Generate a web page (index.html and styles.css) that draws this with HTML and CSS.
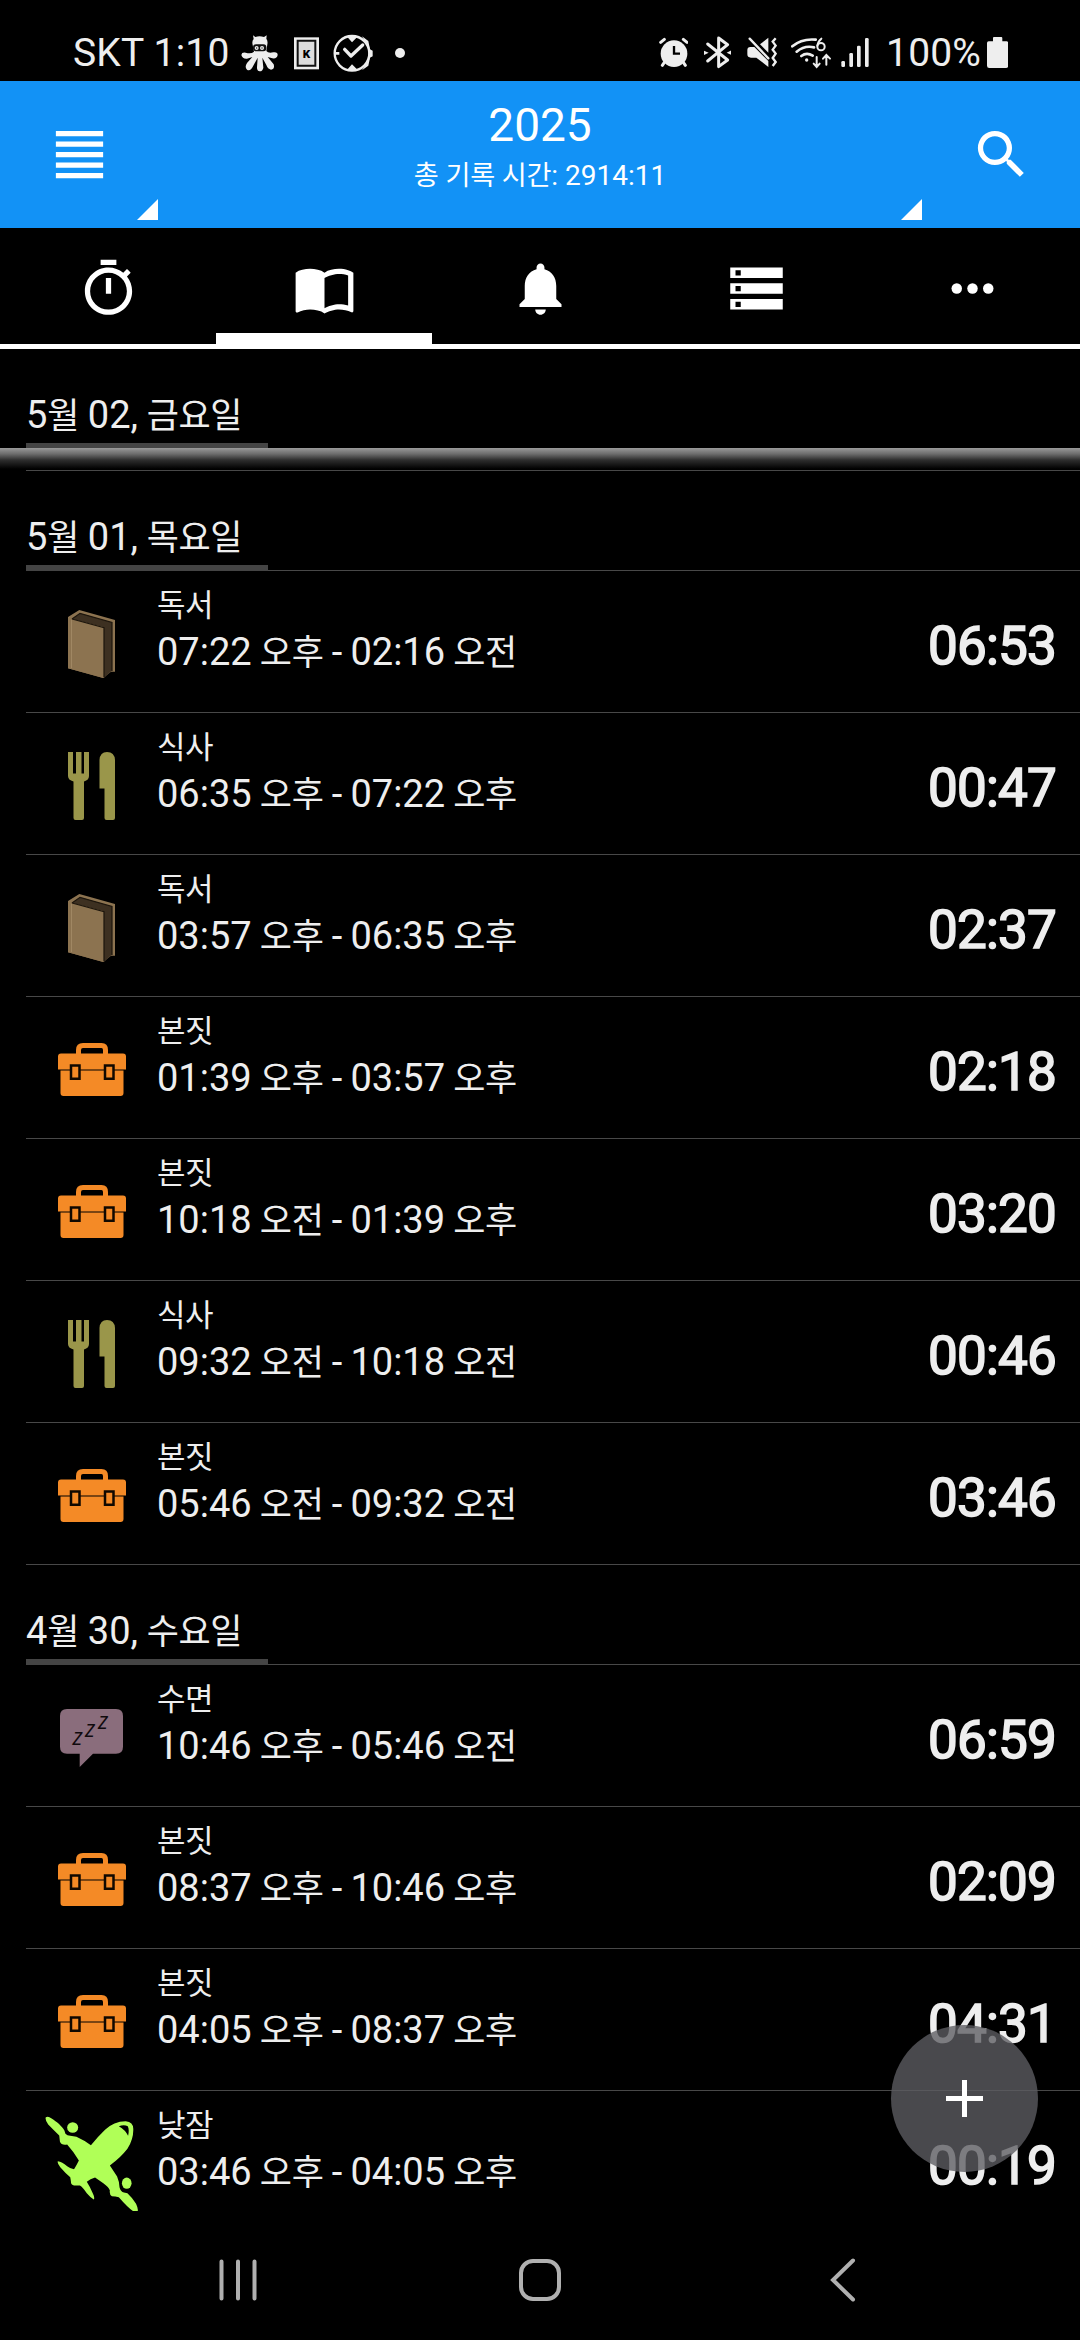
FILE: index.html
```html
<!DOCTYPE html>
<html lang="ko">
<head>
<meta charset="utf-8">
<title>2025</title>
<link rel="stylesheet" href="styles.css">
</head>
<body>
<svg class="defs" aria-hidden="true">
  <symbol id="book" viewBox="0 0 96 96">
    <path fill="#8c7350" d="M24 21 35.3 14 71 24V75.7H67L59 82 24 72.3Z"/>
    <path fill="#3d3021" d="M28 23 36 17.3 68 26.5V74.5L60 82V31.3Z"/>
    <path fill="#8c7350" d="M24 22 59.5 31.3V82L24 72.3Z"/>
    <path fill="none" stroke="#1c150c" stroke-width="1.2" d="M28 23 36 17.3 68 26.5V75M28 23 60 31.6V81"/>
    <path stroke="#a08763" stroke-width="1" d="M27.500 24V72"/>
  </symbol>
  <symbol id="meal" viewBox="0 0 96 96">
    <path fill="#9a964a" d="M24 14H29V35.500H32V14H37.500V35.500H40V14H45V38Q45 42 40 43.500V80Q40 82 38 82H31.500Q29.500 82 29.500 80V43.500Q24 42 24 38ZM55.500 50.500V22Q56 14 63 14Q70.500 14 71 22V80Q71 82 69 82H62.500Q60.500 82 60.500 80V50.500Z"/>
  </symbol>
  <symbol id="work" viewBox="0 0 96 96">
    <path fill="none" stroke="#f48a26" stroke-width="5" d="M34.500 33V28Q34.500 23.500 39 23.500H57.500Q61.500 23.500 61.500 28V33"/>
    <path fill="#f48a26" d="M14 47.500V34.500Q14 31.500 17 31.500H79Q82 31.500 82 34.500V47.500ZM16.500 48.500H79.500V71Q79.500 74 76.500 74H19.500Q16.500 74 16.500 71Z"/>
    <path fill="#f48a26" stroke="#100800" stroke-width="2.500" d="M27 43.500H35.500V56.800H27ZM61 43.500H69.500V56.800H61Z"/>
  </symbol>
  <symbol id="plane" viewBox="0 0 96 95">
    <g transform="translate(-44 -36) scale(.3444 .3333)" fill="#b0ff57">
      <path fill-rule="evenodd" d="M133 110Q140 106 150 114C165 124 180 137 187 150L190 160Q195 166 204 166L222 169Q245 180 264 194Q285 168 305 148Q330 122 365 122Q387 124 387 145Q388 175 370 205Q350 232 319 255Q330 272 340 288Q347 305 347 320Q350 333 360 336L370 338Q385 352 395 370Q403 388 399 393H388Q372 382 345 350Q335 347 325 347Q317 343 319 330Q316 320 300 308L276 291Q262 295 252 304Q262 320 270 340Q276 353 272 357Q262 350 252 338Q240 320 232 315H215Q205 313 206 303L204 290Q190 278 175 260Q165 247 168 242Q180 244 195 257Q205 265 215 266Q222 255 229 240Q215 215 195 192Q178 195 174 183L172 165Q155 148 140 132Q130 118 133 110ZM345 137Q360 132 371 137Q376 146 372 166Q364 148 345 137Z"/>
      <circle cx="211" cy="141" r="16"/><ellipse cx="368" cy="308" rx="14" ry="17"/>
    </g>
  </symbol>
</svg>
<div class="screen">
  <div class="status">
    <span class="carrier">SKT 1:10</span>
    <svg class="s-octo" viewBox="48 0 110 165" fill="#eee"><path d="M84 31 91 36Q103 32 117 36L125 31 124 41Q129 48 127 58L124 78Q130 86 145 82Q158 80 158 90Q156 102 142 100L128 96 146 118Q150 132 138 134Q128 132 124 120L112 98 115 128Q113 139 104 139Q95 137 96 126L98 98 84 124Q76 140 66 134Q58 126 66 114L82 96 66 101Q52 102 49 90Q50 81 62 83Q78 88 87 80L83 60Q80 48 86 42Z"/><rect x="84" y="58" width="40" height="21" rx="9" fill="#111"/><circle cx="95" cy="69" r="6"/><circle cx="111" cy="69" r="6"/><path stroke="#111" stroke-width="2" d="M95 66V72M111 66V72"/></svg>
    <svg class="s-card" viewBox="207 0 75 165"><path fill="#eee" d="M207 37H282V133H207Z"/><path fill="#ddd" stroke="#111" stroke-width="6" d="M218 47H271V122H218Z"/><text class="card-k" x="233" y="98">K</text></svg>
    <svg class="s-check" viewBox="325 0 120 165"><circle cx="382" cy="85" r="52" fill="none" stroke="#eee" stroke-width="7"/><path fill="#eee" d="M366 34H400L382 52ZM366 136H400L382 118ZM331 81H344V89H331ZM412 34 431 48 436 73 444 77V94L436 98 431 122 412 136 420 124 431 98V70L420 48Z"/><path fill="none" stroke="#eee" stroke-width="10" stroke-linecap="round" stroke-linejoin="round" d="M360 73 379 93 414 60"/></svg>
    <i class="s-dot"></i>
    <svg class="s-alarm" viewBox="26 0 89 165" fill="none" stroke="#eee" stroke-linecap="round"><circle cx="71" cy="86" r="40" fill="#eee" stroke="none"/><path stroke-width="9" d="M31 52 42 43M99 43 110 52M42 112 36 121M99 112 105 121"/><path stroke="#000" stroke-width="7" stroke-linecap="butt" d="M71 63V86H89"/></svg>
    <svg class="s-bt" viewBox="162 0 82 165" fill="none" stroke="#eee" stroke-width="9" stroke-linejoin="round" stroke-linecap="round"><path d="M173 57 233 105 206 125V39L233 59 173 108"/><path fill="#eee" stroke="none" d="M162 77 176 83 162 90ZM244 76 230 83 244 90Z"/></svg>
    <svg class="s-mute" viewBox="290 0 92 165" fill="#eee"><path d="M291 75Q291 65 302 66H312L354 108V126L318 98H302Q291 98 291 88ZM329 58 354 38V83Z"/><path fill="none" stroke="#eee" stroke-width="7" stroke-linecap="round" d="M298 41 354 100"/><path fill="none" stroke="#eee" stroke-width="7" d="M376 40 367 50 376 62 367 74 376 86 367 99 376 111 367 123"/></svg>
    <svg class="s-wifi" viewBox="424 0 122 165" fill="none" stroke="#eee" stroke-width="8" stroke-linecap="round"><path d="M428 64Q456 40 498 44M441 80Q465 60 493 67M455 93Q471 81 489 92"/><circle cx="471" cy="105" r="5" fill="#eee" stroke="none"/><circle cx="514" cy="65" r="11" stroke-width="6"/><path stroke-width="6" d="M503 62Q505 49 515 41M501 96V125M492 116 501 126 510 116M530 119V91M520 101 530 90 541 101"/></svg>
    <svg class="s-signal" viewBox="573 0 84 165" fill="#eee"><rect x="574" y="108" width="11" height="18" rx="4"/><rect x="598" y="84" width="11" height="42" rx="4"/><rect x="621" y="62" width="11" height="64" rx="4"/><rect x="645" y="39" width="11" height="87" rx="4"/></svg>
    <span class="percent">100%</span>
    <svg class="s-batt" viewBox="1011 0 64 165" fill="#eee"><path d="M1029 49V39Q1029 36 1032 36H1054Q1057 36 1057 39V49H1070Q1075 49 1075 54V122Q1075 129 1068 129H1018Q1011 129 1011 122V54Q1011 49 1016 49Z"/></svg>
  </div>

  <header class="bar">
    <div class="bar-btn menu"><svg class="ic" viewBox="0 0 24 24"><path d="M3 3h18v2H3zM3 7h18v2H3zM3 11h18v2H3zM3 15h18v2H3zM3 19h18v2H3z"/></svg><i class="corner"></i></div>
    <div class="title"><h1>2025</h1><p><span class="k">총</span> <span class="k">기록</span> <span class="k">시간</span>: 2914:11</p><i class="corner"></i></div>
    <div class="bar-btn"><svg class="ic" viewBox="0 0 24 24"><path d="M15.500 14h-.79l-.28-.27A6.471 6.471 0 0 0 16 9.500 6.500 6.500 0 1 0 9.500 16c1.610 0 3.090-.59 4.230-1.570l.27.28v.79l5 4.990L20.490 19l-4.990-5zm-6 0C7.010 14 5 11.990 5 9.500S7.010 5 9.500 5 14 7.010 14 9.500 11.990 14 9.500 14z"/></svg></div>
  </header>

  <nav class="tabs">
    <div class="tab"><svg class="ic" viewBox="0 0 24 24"><path d="M15 1H9v2h6V1zm-4 13h2V8h-2v6zm8.030-6.610l1.420-1.420c-.43-.51-.9-.99-1.410-1.410l-1.420 1.420C16.070 4.740 14.120 4 12 4c-4.970 0-9 4.030-9 9s4.020 9 9 9 9-4.030 9-9c0-2.120-.74-4.070-1.970-5.610zM12 20c-3.870 0-7-3.130-7-7s3.130-7 7-7 7 3.130 7 7-3.130 7-7 7z"/></svg></div>
    <div class="tab active"><svg class="ic" viewBox="0 0 24 24"><path d="M21 5c-1.110-.35-2.330-.5-3.500-.5-1.950 0-4.050.4-5.500 1.500-1.450-1.100-3.550-1.500-5.500-1.500S2.450 4.900 1 6v14.650c0 .25.25.5.5.5.1 0 .15-.05.25-.05C3.100 20.450 5.050 20 6.500 20c1.950 0 4.050.4 5.500 1.500 1.350-.85 3.800-1.500 5.500-1.500 1.650 0 3.350.3 4.750 1.050.1.050.15.050.25.050.25 0 .5-.25.5-.5V6c-.6-.45-1.250-.75-2-1zm0 13.500c-1.100-.35-2.300-.5-3.500-.5-1.700 0-4.150.65-5.500 1.500V8c1.350-.85 3.800-1.500 5.500-1.500 1.200 0 2.400.15 3.500.5v11.500z"/></svg></div>
    <div class="tab"><svg class="ic" viewBox="0 0 24 24"><path d="M12 22c1.100 0 2-.9 2-2h-4c0 1.100.89 2 2 2zm6-6v-5c0-3.070-1.640-5.640-4.500-6.320V4c0-.83-.67-1.500-1.500-1.500s-1.500.67-1.500 1.500v.68C7.630 5.360 6 7.920 6 11v5l-2 2v1h16v-1l-2-2z"/></svg></div>
    <div class="tab"><svg class="ic" viewBox="0 0 24 24"><path d="M2 20h20v-4H2v4zm2-3h2v2H4v-2zM2 4v4h20V4H2zm4 3H4V5h2v2zm-4 7h20v-4H2v4zm2-3h2v2H4v-2z"/></svg></div>
    <div class="tab"><svg class="ic" viewBox="0 0 24 24"><circle cx="6" cy="12" r="2"/><circle cx="12" cy="12" r="2"/><circle cx="18" cy="12" r="2"/></svg></div>
  </nav>

  <main class="list">
    <div class="day pinned"><h2>5<span class="k">월</span> 02, <span class="k">금요일</span></h2></div>
    <div class="fade"></div>
    <div class="day"><h2>5<span class="k">월</span> 01, <span class="k">목요일</span></h2></div>
    <div class="row"><svg><use href="#book"/></svg><div class="info"><b class="k">독서</b><p>07:22 <span class="k">오후</span> - 02:16 <span class="k">오전</span></p></div><time>06:53</time></div>
    <div class="row"><svg><use href="#meal"/></svg><div class="info"><b class="k">식사</b><p>06:35 <span class="k">오후</span> - 07:22 <span class="k">오후</span></p></div><time>00:47</time></div>
    <div class="row"><svg><use href="#book"/></svg><div class="info"><b class="k">독서</b><p>03:57 <span class="k">오후</span> - 06:35 <span class="k">오후</span></p></div><time>02:37</time></div>
    <div class="row"><svg><use href="#work"/></svg><div class="info"><b class="k">본짓</b><p>01:39 <span class="k">오후</span> - 03:57 <span class="k">오후</span></p></div><time>02:18</time></div>
    <div class="row"><svg><use href="#work"/></svg><div class="info"><b class="k">본짓</b><p>10:18 <span class="k">오전</span> - 01:39 <span class="k">오후</span></p></div><time>03:20</time></div>
    <div class="row"><svg><use href="#meal"/></svg><div class="info"><b class="k">식사</b><p>09:32 <span class="k">오전</span> - 10:18 <span class="k">오전</span></p></div><time>00:46</time></div>
    <div class="row"><svg><use href="#work"/></svg><div class="info"><b class="k">본짓</b><p>05:46 <span class="k">오전</span> - 09:32 <span class="k">오전</span></p></div><time>03:46</time></div>
    <div class="day"><h2>4<span class="k">월</span> 30, <span class="k">수요일</span></h2></div>
    <div class="row">
      <svg viewBox="0 0 96 96">
        <path fill="#8a6d7c" d="M23 19H72Q79 19 79 26V56.700Q79 63.700 72 63.700H49L35.700 77V63.700H23Q16 63.700 16 56.700V26Q16 19 23 19Z"/>
        <g class="zzz"><text x="28.500" y="55">z</text><text x="41" y="47">z</text><text x="54" y="39">z</text></g>
      </svg>
      <div class="info"><b class="k">수면</b><p>10:46 <span class="k">오후</span> - 05:46 <span class="k">오전</span></p></div><time>06:59</time>
    </div>
    <div class="row"><svg><use href="#work"/></svg><div class="info"><b class="k">본짓</b><p>08:37 <span class="k">오후</span> - 10:46 <span class="k">오후</span></p></div><time>02:09</time></div>
    <div class="row"><svg><use href="#work"/></svg><div class="info"><b class="k">본짓</b><p>04:05 <span class="k">오후</span> - 08:37 <span class="k">오후</span></p></div><time>04:31</time></div>
    <div class="row"><svg><use href="#plane"/></svg><div class="info"><b class="k">낮잠</b><p>03:46 <span class="k">오후</span> - 04:05 <span class="k">오후</span></p></div><time>00:19</time></div>
  </main>

  <footer class="nav">
    <svg viewBox="0 0 44 44"><path d="M5.500 3.500V40.500M22 3.500V40.500M38.500 3.500V40.500"/></svg>
    <svg viewBox="0 0 44 44"><rect x="3" y="3" width="38" height="38" rx="12"/></svg>
    <svg viewBox="0 0 44 44"><path d="M33 2.500 13 22 33 41.500"/></svg>
  </footer>
  <button class="fab"><svg viewBox="0 0 37 37"><path d="M18.500 0V37M0 18.500H37"/></svg></button>
</div>
</body>
</html>
```

FILE: styles.css
```css
* { box-sizing: border-box; margin: 0; padding: 0; }
body { background: #000; font-family: Roboto, "Noto Sans CJK KR", sans-serif; color: #eee; }
.defs { position: absolute; width: 0; height: 0; }
.screen { position: relative; width: 1080px; height: 2340px; display: flex; flex-direction: column; overflow: hidden; background: #000; }
svg { display: block; flex: none; }
.k { font-family: "Noto Sans CJK KR", sans-serif; font-size: 0.92em; letter-spacing: -0.01em; line-height: 1; }

.status { height: 81px; flex: none; display: flex; align-items: flex-start; padding: 25px 0 0 73px; }
.status svg { height: 55px; }
.carrier, .percent { font-size: 39px; line-height: 57px; white-space: nowrap; }
.carrier { width: 168px; letter-spacing: 0.2px; }
.percent { width: 96px; margin-left: 17px; letter-spacing: 0.2px; }
.s-octo { width: 36.7px; }
.s-card { width: 25px; margin-left: 16.300px; }
.card-k { font: 900 35px Roboto, sans-serif; fill: #000; }
.s-check { width: 40px; margin-left: 14.300px; }
.s-dot { width: 10px; height: 10px; border-radius: 50%; background: #eee; margin: 23px 0 0 21.500px; }
.s-alarm { width: 29.700px; margin-left: auto; }
.s-bt { width: 27.300px; margin-left: 15.700px; }
.s-mute { width: 30.700px; margin-left: 15.300px; }
.s-wifi { width: 40.700px; margin-left: 14px; }
.s-signal { width: 28px; margin-left: 9px; }
.s-batt { width: 21.300px; margin: 0 71.700px 0 5px; }

.bar { height: 147px; flex: none; display: flex; background: #1292f6; color: #fff; }
.bar-btn { position: relative; width: 158px; display: flex; align-items: center; justify-content: center; }
.ic { width: 63px; height: 63px; fill: #fff; }
.title { position: relative; flex: 1; text-align: center; padding-top: 16px; }
.title h1 { font-weight: 400; font-size: 46px; line-height: 56px; }
.title p { font-size: 28px; line-height: 45px; }
.title .k { font-size: 0.97em; }
.corner { position: absolute; right: 0; bottom: 8px; width: 21px; height: 21px; background: #fff; clip-path: polygon(100% 0, 100% 100%, 0 100%); }

.tabs { height: 121px; flex: none; display: flex; border-bottom: 5px solid #fff; }
.tab { flex: 1; display: flex; align-items: center; justify-content: center; padding-top: 4px; }
.tab.active { box-shadow: inset 0 -11px #fff; }

.list { height: 1862px; flex: none; overflow: hidden; }
.day { height: 100px; margin-left: 26px; border-bottom: 1px solid #484848; }
.day h2 { width: 242px; height: 100px; font-weight: 400; font-size: 38px; line-height: 44px; padding-top: 44px; border-bottom: 6px solid #444; white-space: nowrap; word-spacing: -0.8px; }
.pinned { height: 99px; border: 0; }
.pinned h2 { height: 99px; border-bottom-width: 5px; }
.fade { height: 23px; background: linear-gradient(90deg, #000 26px, #484848 26px) bottom / 100% 1px no-repeat, linear-gradient(#9a9a9a, #6c6c6c 6px, #2e2e2e 12px, #000 21px); }
.row { height: 142px; margin-left: 26px; padding-right: 24px; display: flex; border-bottom: 1px solid #484848; }
.row svg { width: 96px; height: 96px; margin: 25px 17px 0 18px; }
.info { flex: 1; padding-top: 12px; white-space: nowrap; }
.info b { display: block; font-weight: 400; font-size: 31px; line-height: 40px; height: 44px; letter-spacing: -0.5px; }
.info p { font-size: 38px; line-height: 50px; height: 50px; word-spacing: -1.2px; }
.row time { font-size: 53px; line-height: 62px; padding-top: 44px; letter-spacing: -0.8px; -webkit-text-stroke: 1.6px #eee; }
.zzz { font: italic 23px "Open Sans", sans-serif; fill: #100a0d; }

.nav { height: 129px; flex: none; display: flex; align-items: center; justify-content: center; gap: 258px; padding-top: 9px; }
.nav svg { width: 44px; height: 44px; fill: none; stroke: #b0b0b0; stroke-width: 4; stroke-linecap: round; }
.fab { position: absolute; left: 891px; top: 2025px; width: 147px; height: 147px; border: 0; border-radius: 50%; background: rgba(92, 92, 98, 0.79); display: flex; align-items: center; justify-content: center; }
.fab svg { width: 37px; height: 37px; stroke: #fff; stroke-width: 5; }
```
